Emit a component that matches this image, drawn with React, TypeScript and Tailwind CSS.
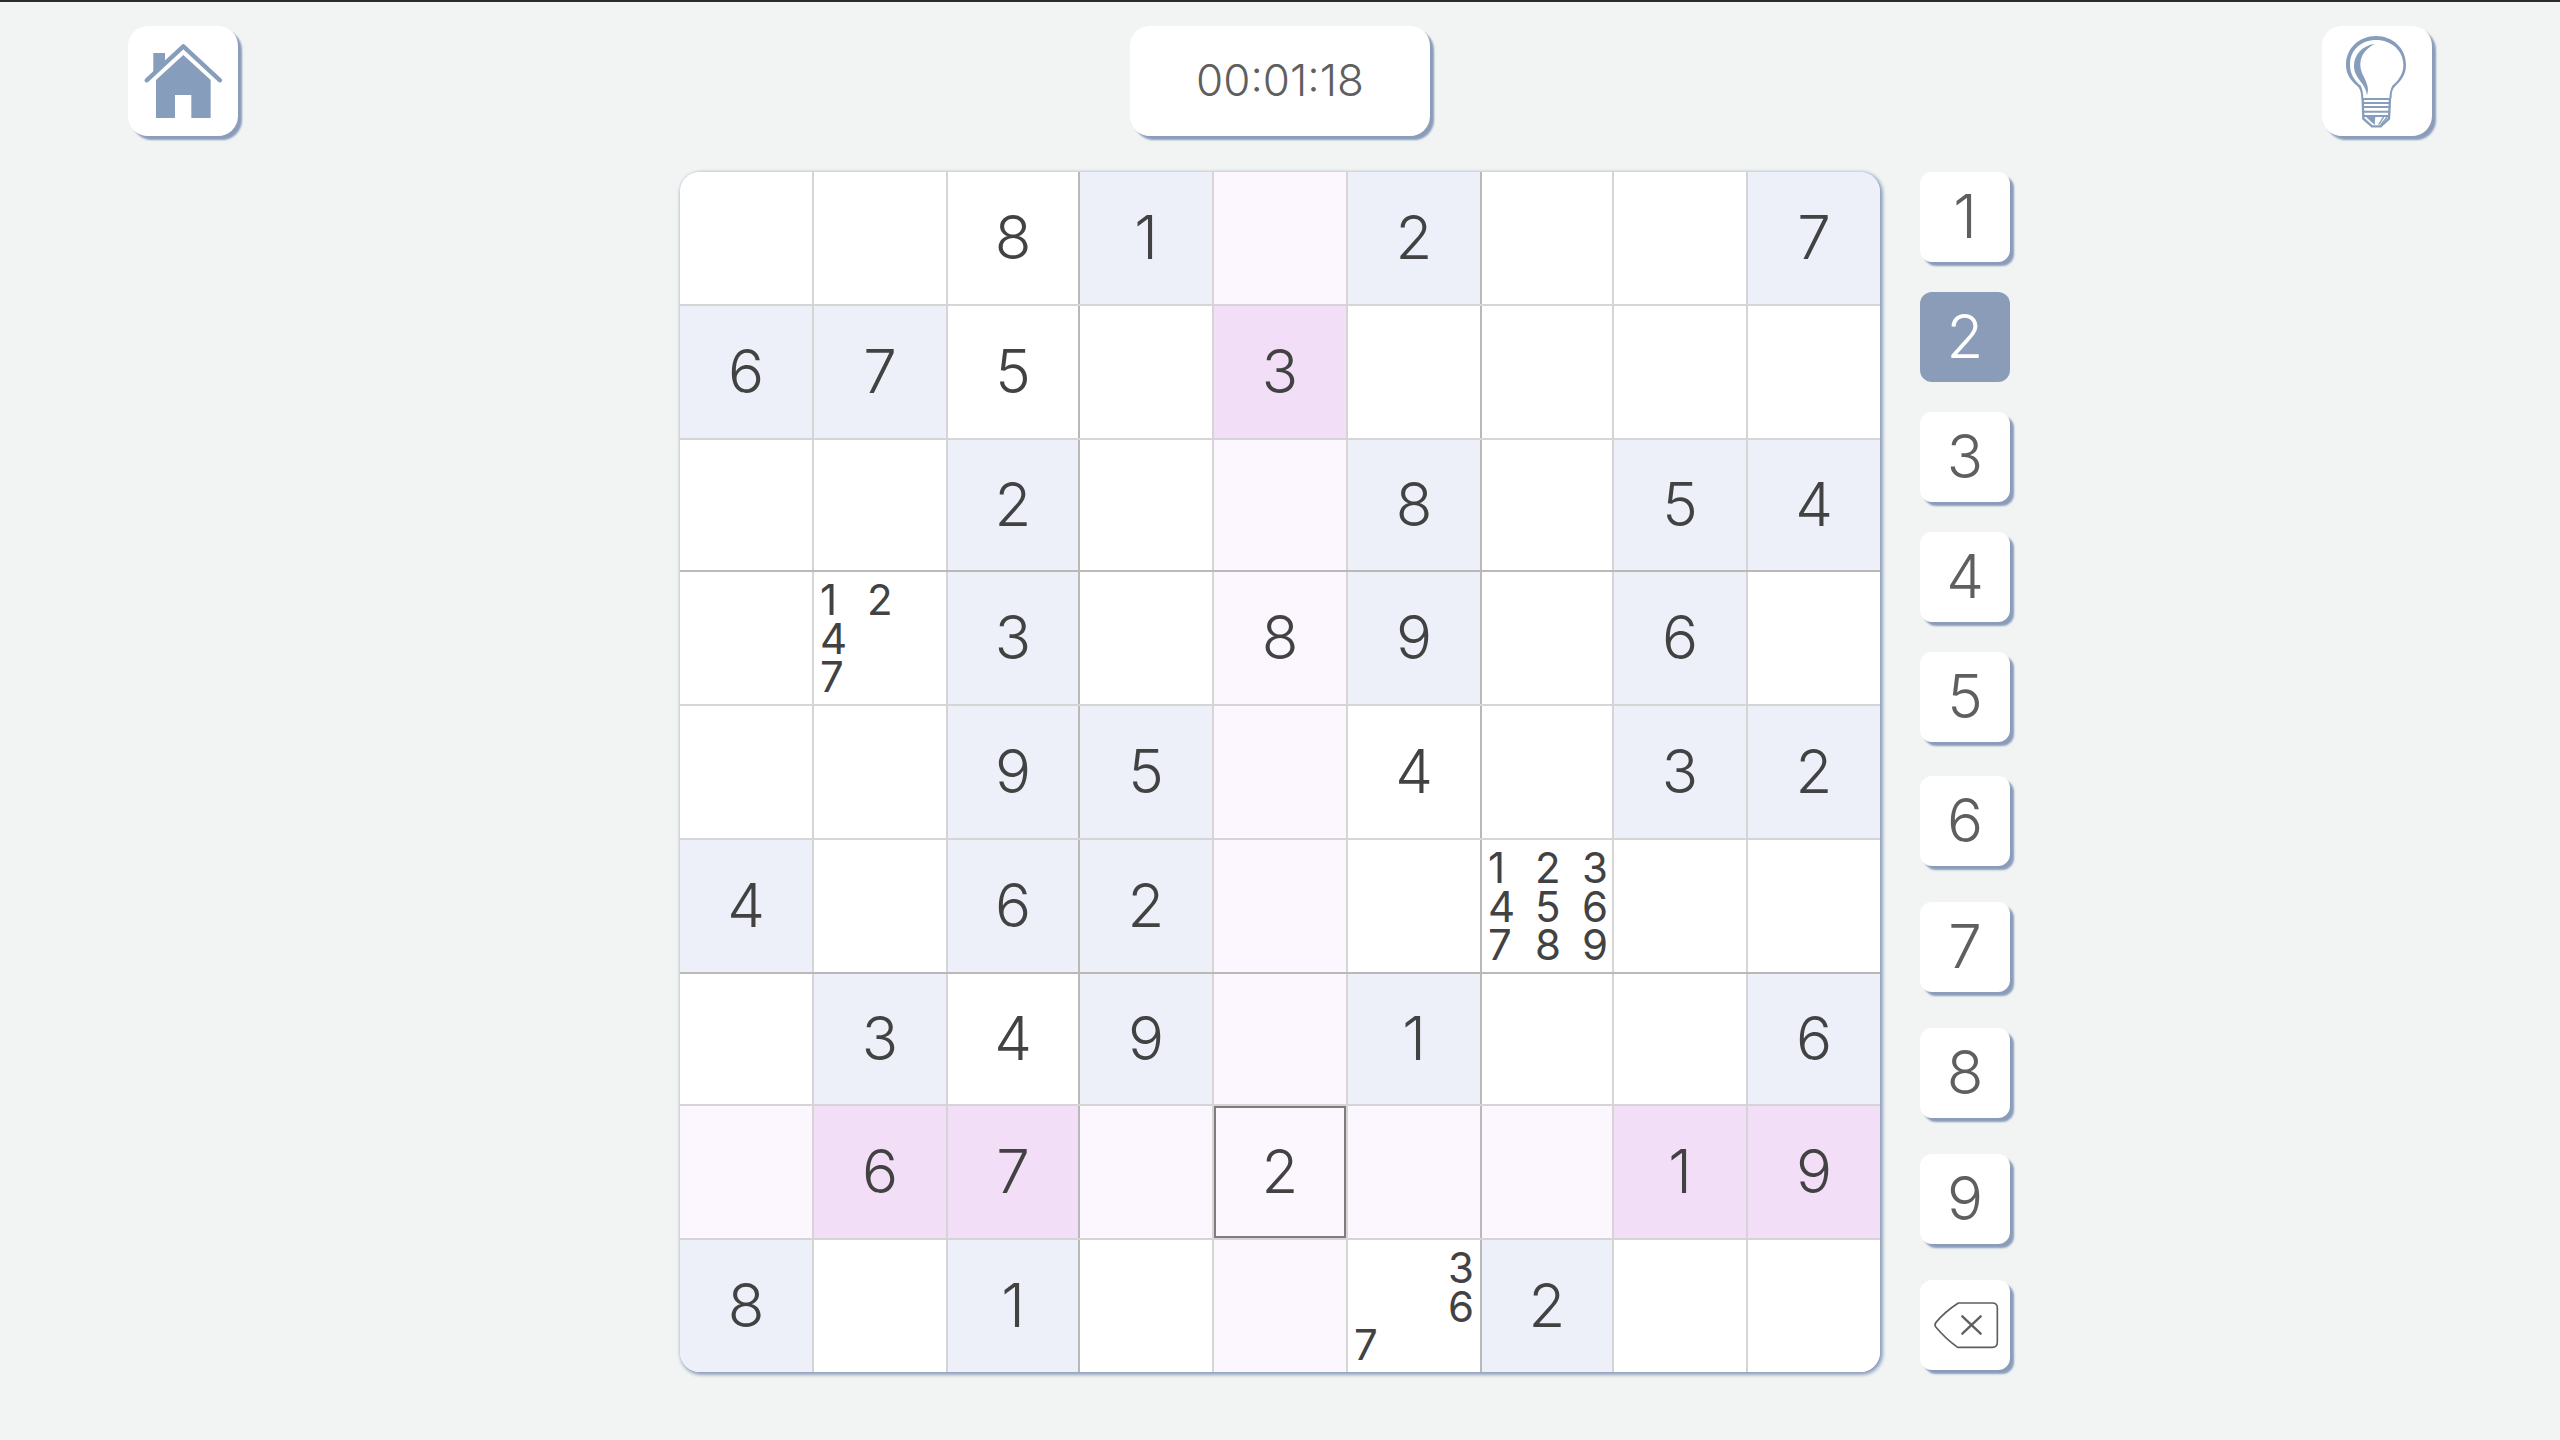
import { useState } from 'react'
import clsx from 'clsx'

// '.' = case vide
const GIVENS = [
  '...1.2..7',
  '67..3....',
  '..2..8.54',
  '..3..9.6.',
  '..95...32',
  '4.62.....',
  '.3.9.1..6',
  '.67....19',
  '8.1...2..',
]

const ENTRIES: Record<string, number> = {
  '0-2': 8,
  '1-2': 5,
  '3-4': 8,
  '4-5': 4,
  '6-2': 4,
  '7-4': 2,
}

const NOTES: Record<string, number[]> = {
  '3-1': [1, 2, 4, 7],
  '5-6': [1, 2, 3, 4, 5, 6, 7, 8, 9],
  '8-5': [3, 6, 7],
}

const DIGITS = [1, 2, 3, 4, 5, 6, 7, 8, 9]

function HomeIcon() {
  return (
    <svg viewBox="0 0 330 330" className="w-full h-full" aria-hidden="true">
      <path d="M76 81 H111 V105 L76 138 Z" fill="#869dbc" />
      <path d="M56 163 L166 61 L276 163" fill="none" stroke="#869dbc" strokeWidth="13" strokeLinecap="round" strokeLinejoin="round" />
      <path d="M166 87 L248 162 V276 H190 V207 H141 V276 H84 V162 Z" fill="#869dbc" />
    </svg>
  )
}

function BulbIcon() {
  return (
    <svg viewBox="0 0 330 330" className="w-full h-full" aria-hidden="true">
      <path d="M118 217 C117 200 115 190 108 182 C84 163 72 143 72 117 C72 66 112 30 162 30 C212 30 252 66 252 117 C252 143 240 163 218 182 C210 192 209 202 209 217 Z" fill="#869dbc" />
      <path d="M124 217 C123 202 122 190 116 179 C96 163 84 143 84 115 C84 72 118 42 162 42 C208 42 244 74 244 117 C244 141 232 161 212 178 C205 190 203 203 202 217 Z" fill="#fff" />
      <path d="M159 54 C121 58 96 86 96 120 C96 158 132 172 135 208 C148 172 115 150 115 116 C115 90 130 68 159 54 Z" fill="#869dbc" />
      <path d="M122 217 L124 278 L150 301 H176 L201 278 L204 217" fill="none" stroke="#869dbc" strokeWidth="7" />
      <path d="M119 219 H207 M121 231 H205 M121 243 H205 M121 257 H205 M121 270 H204" fill="none" stroke="#869dbc" strokeWidth="6" />
      <path d="M130 271 H160 L158 297 Z" fill="#869dbc" />
      <path d="M186 271 L170 296 M196 273 L176 296" fill="none" stroke="#869dbc" strokeWidth="4" />
    </svg>
  )
}

function EraseIcon() {
  return (
    <svg viewBox="0 0 270 270" className="w-full h-full" fill="none" stroke="#5f5f5f" aria-hidden="true">
      <path d="M115 69 H217 Q232 69 232 84 V187 Q232 202 217 202 H113 C90 186 68 166 48 142 Q42 134 48 127 C68 103 92 84 115 69 Z" strokeWidth="5" />
      <path d="M127 109 L182 161 M182 109 L127 161" strokeWidth="7" strokeLinecap="round" />
    </svg>
  )
}

function PadButton({ digit, active, onClick }: { digit: number; active: boolean; onClick: () => void }) {
  return (
    <button
      onClick={onClick}
      aria-pressed={active}
      className={clsx(
        'w-[90px] h-[90px] pb-0.5 flex items-center justify-center rounded-xl text-[60px] leading-none font-light',
        active ? 'bg-[#8b9cb9] text-white' : 'bg-white text-[#5f5f5f] shadow-[4px_4px_2px_#8b9cba]',
      )}
    >
      {digit}
    </button>
  )
}

function Notes({ values }: { values: number[] }) {
  return (
    <span className="w-full h-full grid grid-cols-[47px_47px_1fr] grid-rows-3 pl-1.5 pt-2 pb-1.5 text-[42px] leading-[39px] text-left">
      {DIGITS.map(n => (
        <span key={n}>{values.includes(n) ? n : ''}</span>
      ))}
    </span>
  )
}

export default function App() {
  const [selected, setSelected] = useState({ row: 7, col: 4 })
  const [digit, setDigit] = useState(2)

  return (
    <div className="min-h-screen bg-[#f1f4f3] border-t-2 border-[#2b2b2b] font-['Inter','Liberation_Sans',sans-serif]">

      {/* Barre du haut */}
      <header className="px-[5%] pt-6 flex items-center justify-between">
        <button aria-label="Home" className="w-[110px] h-[110px] bg-white rounded-[20px] shadow-[4px_4px_2px_#8b9cba]">
          <HomeIcon />
        </button>
        <div className="w-[300px] h-[110px] pb-0.5 flex items-center justify-center bg-white rounded-[20px] shadow-[4px_4px_2px_#8b9cba] text-[44px] leading-none font-light text-[#5f5f5f]">
          00:01:18
        </div>
        <button aria-label="Hint" className="w-[110px] h-[110px] bg-white rounded-[20px] shadow-[4px_4px_2px_#8b9cba]">
          <BulbIcon />
        </button>
      </header>

      <main className="mt-9 grid grid-cols-[1fr_auto_1fr] gap-10">

        {/* Grille */}
        <div className="col-start-2 w-[calc(100vh*5/6)] aspect-square grid grid-rows-[67fr_67fr_66fr_67fr_67fr_67fr_66fr_67fr_66fr] bg-white rounded-[20px] overflow-hidden shadow-[2px_2px_4px_#8b9cba,1px_1px_4px_#8b9cba]">
          {GIVENS.map((line, row) => (
            <div
              key={row}
              className={clsx(
                'grid grid-cols-[67fr_67fr_66fr_67fr_67fr_67fr_66fr_67fr_66fr] min-h-0',
                row < 8 && 'border-b-2',
                row % 3 === 2 ? 'border-[#bcb8b8]' : 'border-[#d5d5d5]',
              )}
            >
              {line.split('').map((char, col) => {
                const key = `${row}-${col}`
                const given = char !== '.'
                const current = row === selected.row && col === selected.col
                const inLine = row === selected.row || col === selected.col
                return (
                  <div
                    key={key}
                    className={clsx(
                      'min-w-0 min-h-0',
                      col < 8 && 'border-r-2',
                      col % 3 === 2 ? 'border-[#bcb8b8]' : 'border-[#d5d5d5]',
                    )}
                  >
                    <button
                      aria-label={`Row ${row + 1}, column ${col + 1}`}
                      onClick={() => setSelected({ row, col })}
                      className={clsx(
                        'w-full h-full pb-0.5 flex items-center justify-center text-[60px] leading-none text-[#424242]',
                        NOTES[key] ? 'font-normal' : 'font-light',
                        inLine && (given ? 'bg-[#f3def7]' : 'bg-[#fcf7fe]'),
                        !inLine && (given ? 'bg-[#edf0f9]' : 'bg-white'),
                        current && 'border-2 border-[#7f7c80]',
                      )}
                    >
                      {NOTES[key] ? <Notes values={NOTES[key]} /> : given ? char : ENTRIES[key]}
                    </button>
                  </div>
                )
              })}
            </div>
          ))}
        </div>

        {/* Pavé numérique */}
        <div className="flex flex-col items-start gap-[34px]">
          <div className="flex flex-col gap-[30px]">
            {DIGITS.slice(0, 5).map(n => (
              <PadButton key={n} digit={n} active={n === digit} onClick={() => setDigit(n)} />
            ))}
          </div>
          <div className="flex flex-col gap-9">
            {DIGITS.slice(5).map(n => (
              <PadButton key={n} digit={n} active={n === digit} onClick={() => setDigit(n)} />
            ))}
            <button aria-label="Erase" className="w-[90px] h-[90px] bg-white rounded-xl shadow-[4px_4px_2px_#8b9cba]">
              <EraseIcon />
            </button>
          </div>
        </div>

      </main>
    </div>
  )
}
